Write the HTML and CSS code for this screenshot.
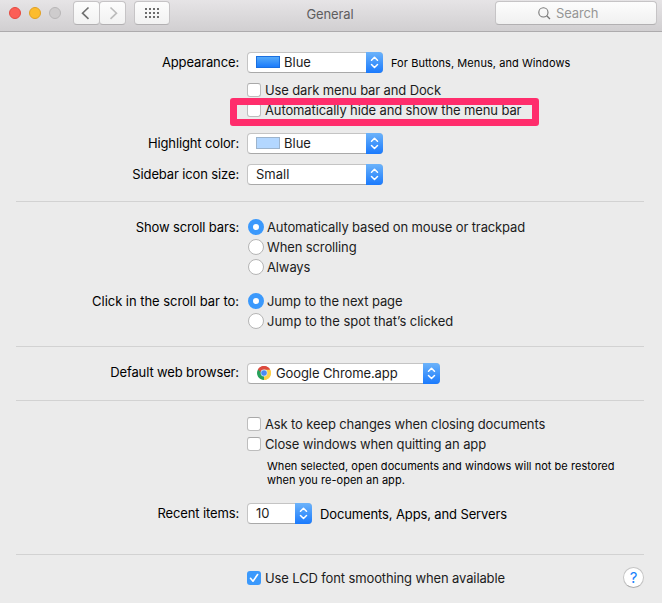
FILE: index.html
```html
<!DOCTYPE html>
<html lang="en">
<head>
<meta charset="utf-8">
<title>General</title>
<link rel="stylesheet" href="styles.css">
</head>
<body>
<svg width="0" height="0" class="defs">
  <symbol id="step" viewBox="0 0 17 21"><path d="M5.5 8.3 8.5 5.3l3 3M5.5 12.5l3 3 3-3" fill="none" stroke="#fff" stroke-width="1.5" stroke-linecap="round" stroke-linejoin="round"/></symbol>
</svg>
<header class="titlebar">
  <div class="lights"><i class="light red"></i><i class="light yellow"></i><i class="light gray"></i></div>
  <div class="nav">
    <button class="tool back" aria-label="Back"><svg width="25" height="22"><path d="M14.5 5.5 8.5 11.2l6 5.7" fill="none" stroke="#6f6f6f" stroke-width="1.6"/></svg></button>
    <button class="tool forward" aria-label="Forward"><svg width="25" height="22"><path d="M10.5 5.5l6 5.7-6 5.7" fill="none" stroke="#bcbcbc" stroke-width="1.6"/></svg></button>
  </div>
  <button class="tool grid" aria-label="Show all"><svg width="34" height="22"><g stroke="#6c6c6c" stroke-width="2" stroke-dasharray="2 2"><path d="M10 7h14M10 11h14M10 15h14"/></g></svg></button>
  <h1 class="title">General</h1>
  <div class="search"><svg width="13" height="13"><circle cx="5.4" cy="5.4" r="4.6" fill="none" stroke="#777" stroke-width="1.1"/><path d="M8.7 8.7 12 12" stroke="#777" stroke-width="1.3"/></svg><span>Search</span></div>
</header>
<main>
  <section class="group appearance">
    <div class="row">
      <span class="label">Appearance:</span>
      <div class="select"><i class="swatch strong"></i><span class="value">Blue</span><svg class="step"><use href="#step"/></svg></div>
      <span class="hint">For Buttons, Menus, and Windows</span>
    </div>
    <div class="row option first"><span class="label"></span><i class="check"></i><span class="text">Use dark menu bar and Dock</span></div>
    <div class="row option marked"><span class="label"></span><i class="check"></i><span class="text">Automatically hide and show the menu bar</span><i class="marker"></i></div>
    <div class="row highlight">
      <span class="label">Highlight color:</span>
      <div class="select"><i class="swatch light-blue"></i><span class="value">Blue</span><svg class="step"><use href="#step"/></svg></div>
    </div>
    <div class="row sidebar">
      <span class="label">Sidebar icon size:</span>
      <div class="select"><span class="value">Small</span><svg class="step"><use href="#step"/></svg></div>
    </div>
  </section>
  <section class="group scrolling">
    <div class="row option"><span class="label">Show scroll bars:</span><i class="radio on"></i><span class="text">Automatically based on mouse or trackpad</span></div>
    <div class="row option"><span class="label"></span><i class="radio"></i><span class="text">When scrolling</span></div>
    <div class="row option"><span class="label"></span><i class="radio"></i><span class="text">Always</span></div>
    <div class="row option click"><span class="label loose">Click in the scroll bar to:</span><i class="radio on"></i><span class="text">Jump to the next page</span></div>
    <div class="row option"><span class="label"></span><i class="radio"></i><span class="text loose">Jump to the spot that’s clicked</span></div>
  </section>
  <section class="group browser">
    <div class="row">
      <span class="label">Default web browser:</span>
      <div class="select wide">
        <svg class="chrome" width="14" height="14" viewBox="0 0 28 28"><path d="M14 14 1.9 7A14 14 0 0 1 26.1 7z" fill="#dc4a3e"/><path d="M14 14 26.1 7A14 14 0 0 1 14 28z" fill="#fdd049"/><path d="M14 14v14A14 14 0 0 1 1.9 7z" fill="#27a15b"/><path d="M14 7h12.1A14 14 0 0 1 14 28l6.1-10.5z" fill="#fdd049"/><path d="M7.9 17.5 1.9 7l5-2 7 9z" fill="#27a15b"/><path d="M1.9 7A14 14 0 0 1 26.1 7H14a7 7 0 0 0-6.8 5z" fill="#dc4a3e"/><circle cx="14" cy="14" r="6.8" fill="#e3ecf8"/><circle cx="14" cy="14" r="5.6" fill="#4a8af4"/></svg>
        <span class="value chrome-name">Google Chrome.app</span><svg class="step"><use href="#step"/></svg>
      </div>
    </div>
  </section>
  <section class="group documents">
    <div class="row option"><span class="label"></span><i class="check"></i><span class="text">Ask to keep changes when closing documents</span></div>
    <div class="row option"><span class="label"></span><i class="check"></i><span class="text">Close windows when quitting an app</span></div>
    <p class="note">When selected, open documents and windows will not be restored<br>when you re-open an app.</p>
    <div class="row recent">
      <span class="label">Recent items:</span>
      <div class="select small"><span class="value">10</span><svg class="step"><use href="#step"/></svg></div>
      <span class="after">Documents, Apps, and Servers</span>
    </div>
  </section>
  <section class="group smoothing">
    <div class="row option"><span class="label"></span><i class="check on"><svg width="14" height="14"><path d="M3.5 7.3 6 10.2l4.6-6.7" fill="none" stroke="#fff" stroke-width="1.6" stroke-linecap="round" stroke-linejoin="round"/></svg></i><span class="text">Use LCD font smoothing when available</span><button class="help">?</button></div>
  </section>
</main>
</body>
</html>
```
FILE: styles.css
```css
* { box-sizing: border-box; }
body { margin: 0; width: 662px; height: 603px; overflow: hidden; background: #ebebeb; color: #1c1c1c; font: 13px/20px Inter, "Liberation Sans", sans-serif; }
i { display: block; flex: none; }
svg { display: block; flex: none; }
button { padding: 0; margin: 0; font: inherit; }
.defs { position: absolute; }
.titlebar { height: 32px; display: flex; align-items: flex-start; background: linear-gradient(#e6e4e6, #d1cfd1); border-bottom: 1px solid #adabad; position: relative; }
.lights { display: flex; gap: 8px; padding: 7px 0 0 9px; width: 73px; }
.light { width: 12px; height: 12px; border-radius: 50%; border: 1px solid; }
.red { background: #fb5f57; border-color: #e5493f; }
.yellow { background: #fcbc2e; border-color: #e1a023; }
.gray { background: #cecccd; border-color: #b8b6b7; }
.nav { display: flex; margin: 1px 8px 0 0; }
.tool { height: 24px; border: 1px solid #c6c4c6; border-bottom-color: #b2b0b2; background: linear-gradient(#fdfdfd, #f2f2f2); border-radius: 4px; }
.back { width: 27px; }
.forward { width: 27px; margin-left: -1px; }
.grid { width: 36px; margin-top: 1px; }
.title { position: absolute; left: 0; right: 0; top: 4px; margin: 0; text-align: center; font-size: 13px; font-weight: 400; line-height: 20px; letter-spacing: -0.1px; color: #5e5d5e; pointer-events: none; text-indent: -2px; }
.search { margin: 1px 5px 0 auto; width: 162px; height: 24px; border: 1px solid #c6c4c6; border-bottom-color: #b2b0b2; border-radius: 4px; background: linear-gradient(#fdfdfd, #f0f0f0); display: flex; align-items: center; padding-left: 42px; gap: 5px; letter-spacing: -0.15px; color: #969696; }
.group { margin: 0 18px 0 16px; border-bottom: 1px solid #d2d2d2; }
.row { display: flex; align-items: center; height: 21px; position: relative; }
.option { height: 20px; }
.label { width: 223px; margin-right: 8px; padding-bottom: 2px; text-align: right; letter-spacing: -0.13px; color: #000; white-space: nowrap; flex: none; }
.option .label { padding-bottom: 0; }
.text, .value, .hint, .after { white-space: nowrap; }
.text, .after { letter-spacing: -0.125px; }
.option .loose { letter-spacing: -0.04px; }
.value { padding-bottom: 2px; }
.appearance { padding: 20px 0 16px; }
.first { margin-top: 7px; }
.highlight { margin-top: 13px; }
.sidebar { margin-top: 10px; }
.scrolling { padding: 15px 0; }
.click { margin-top: 14px; }
.browser { padding: 16px 0; }
.browser .label { padding-bottom: 3px; }
.documents { padding: 13px 0 30px; }
.recent { margin-top: 16px; }
.smoothing { padding-top: 13px; border: 0; }
.select { width: 136px; height: 21px; border: 1px solid #c4c4c4; border-bottom-color: #a9a9a9; border-radius: 4px; background: #fff; display: flex; align-items: center; padding-left: 8px; }
.wide { width: 193px; }
.small { width: 65px; }
.step { width: 17px; height: 21px; margin: -1px -1px -1px auto; border-radius: 0 4px 4px 0; background: linear-gradient(#6cb3fa, #1a7afd); }
.swatch { width: 24px; height: 12px; margin: -1px 4px 0 0; border: 1px solid #1a6fe0; }
.strong { background: linear-gradient(#55aaf9, #1b7bfb); }
.light-blue { background: #b3d7ff; border-color: #9db4cc; }
.chrome { margin: -1px 5px 0 1px; }
.chrome-name { letter-spacing: -0.1px; }
.check { width: 14px; height: 14px; background: #fff; border: 1px solid #bdbdbd; border-top-color: #a9a9a9; border-radius: 3px; margin-right: 4px; }
.check.on { border: 0; background: #3b99fc; }
.radio { width: 16px; height: 16px; background: #fff; border: 1px solid #b5b5b5; border-radius: 50%; margin: 0 3px 0 1px; }
.radio.on { border: 5px solid #3b99fc; }
.marker { position: absolute; left: 214px; top: -2px; width: 309px; height: 28px; border: 7px solid #ff2d6c; border-radius: 3px; }
.hint { font-size: 11px; letter-spacing: 0.06px; margin-left: 8px; color: #000; }
.note { margin: 5px 0 0 251px; font-size: 11px; line-height: 14px; letter-spacing: 0.035px; color: #000; white-space: nowrap; }
.after { margin-left: 8px; color: #000; }
.help { width: 21px; height: 21px; margin: -1px 0 0 auto; border: 1px solid #c4c4c4; border-bottom-color: #aaa; border-radius: 50%; background: #fff; color: #1a82fb; font-size: 15px; font-weight: 400; line-height: 18px; text-align: center; }
```
